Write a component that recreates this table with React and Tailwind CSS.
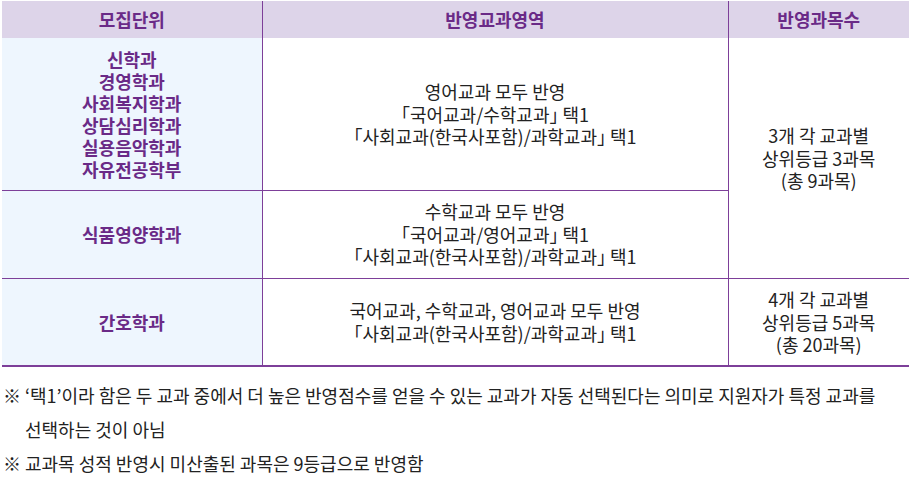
const font = { fontFamily: '"Noto Sans CJK KR", "Noto Sans", sans-serif' };

const rows = [
  {
    dept: ["신학과", "경영학과", "사회복지학과", "상담심리학과", "실용음악학과", "자유전공학부"],
    area: ["영어교과 모두 반영", "「국어교과/수학교과」 택1", "「사회교과(한국사포함)/과학교과」 택1"],
    count: ["3개 각 교과별", "상위등급 3과목", "(총 9과목)"],
    span: 2,
    h: "h-[152px]",
  },
  {
    dept: ["식품영양학과"],
    area: ["수학교과 모두 반영", "「국어교과/영어교과」 택1", "「사회교과(한국사포함)/과학교과」 택1"],
    h: "h-[88px]",
  },
  {
    dept: ["간호학과"],
    area: ["국어교과, 수학교과, 영어교과 모두 반영", "「사회교과(한국사포함)/과학교과」 택1"],
    count: ["4개 각 교과별", "상위등급 5과목", "(총 20과목)"],
    span: 1,
    h: "h-[88px]",
  },
];

function Lines({ items }) {
  return items.map((t, i) => <div key={i}>{t}</div>);
}

export default function App() {
  return (
    <div
      className="w-[911px] h-[478px] bg-white text-[#222] overflow-hidden [font-feature-settings:'halt']"
      style={font}
    >
      <table className="ml-[2px] mt-[1px] w-[907px] border-collapse text-center text-[18px] leading-[22.5px]">
        <thead>
          <tr className="h-[37px] bg-[#ddd4e9] text-[#6a2a87] font-bold">
            <th className="w-[260px] border-r border-[#7d3f99]">모집단위</th>
            <th className="w-[466px] border-r border-[#7d3f99]">반영교과영역</th>
            <th>반영과목수</th>
          </tr>
        </thead>
        <tbody>
          {rows.map((r, i) => (
            <tr key={i} className={`${r.h} ${i < 2 ? "border-b" : "border-b-2"} border-[#7d3f99]`}>
              <td className="bg-[#eef6fe] border-r border-[#7d3f99] font-bold text-[#6a2a87] leading-[22px]">
                <Lines items={r.dept} />
              </td>
              <td className="border-r border-[#7d3f99]">
                <Lines items={r.area} />
              </td>
              {r.count && (
                <td rowSpan={r.span} className="align-middle">
                  <Lines items={r.count} />
                </td>
              )}
            </tr>
          ))}
        </tbody>
      </table>
      <div className="mt-[11px] pl-[3px] text-[18px] leading-[34px]">
        <div className="flex">
          <span className="w-[22px] shrink-0">※</span>
          <div>
            ‘택1’이라 함은 두 교과 중에서 더 높은 반영점수를 얻을 수 있는 교과가 자동 선택된다는 의미로 지원자가 특정 교과를
            <br />
            선택하는 것이 아님
          </div>
        </div>
        <div className="flex">
          <span className="w-[22px] shrink-0">※</span>
          <div>교과목 성적 반영시 미산출된 과목은 9등급으로 반영함</div>
        </div>
      </div>
    </div>
  );
}
